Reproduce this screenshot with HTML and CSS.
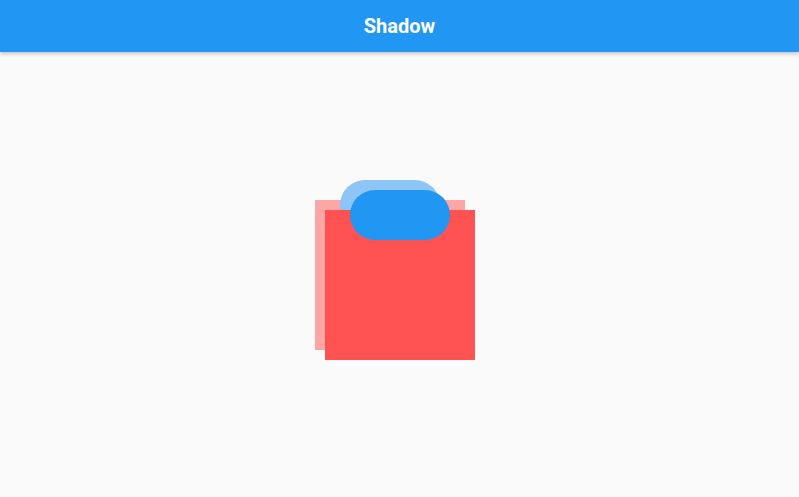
FILE: index.html
```html
<!DOCTYPE html>
<html>
<head>
<meta charset="utf-8">
<link rel="stylesheet" href="styles.css">
</head>
<body>
<header class="appbar"><h1 class="title">Shadow</h1></header>
<main class="content">
  <div class="stage">
    <div class="shape square shadow-red"></div>
    <div class="shape pill shadow-blue"></div>
    <div class="shape square solid-red"></div>
    <div class="shape pill solid-blue"></div>
  </div>
</main>
</body>
</html>
```
FILE: styles.css
```css
html, body { margin: 0; height: 100%; }
body {
  background: #fafafa;
  font-family: Roboto, "Liberation Sans", sans-serif;
  display: flex;
  flex-direction: column;
  overflow: hidden;
}
.appbar {
  height: 52px;
  flex: none;
  background: #2196f3;
  display: flex;
  align-items: center;
  justify-content: center;
  box-shadow: 0 2px 4px rgba(0,0,0,0.22);
  position: relative;
  z-index: 1;
}
.title {
  margin: 0;
  color: #fff;
  font-size: 20px;
  font-weight: 700;
  letter-spacing: 0;
}
.content {
  flex: 1;
  display: grid;
  place-items: center;
}
.stage {
  position: relative;
  width: 160px;
  height: 180px;
  margin-right: 9px;
  margin-bottom: 9px;
}
.shape { position: absolute; }
.square { width: 150px; height: 150px; background: #ff5252; }
.pill { width: 100px; height: 50px; border-radius: 25px; background: #2196f3; }
.shadow-red { left: 0; top: 20px; background: #fca6a6; }
.shadow-blue { left: 25px; top: 0; background: #8dc6f6; }
.solid-red { left: 10px; top: 30px; }
.solid-blue { left: 35px; top: 10px; }
```
